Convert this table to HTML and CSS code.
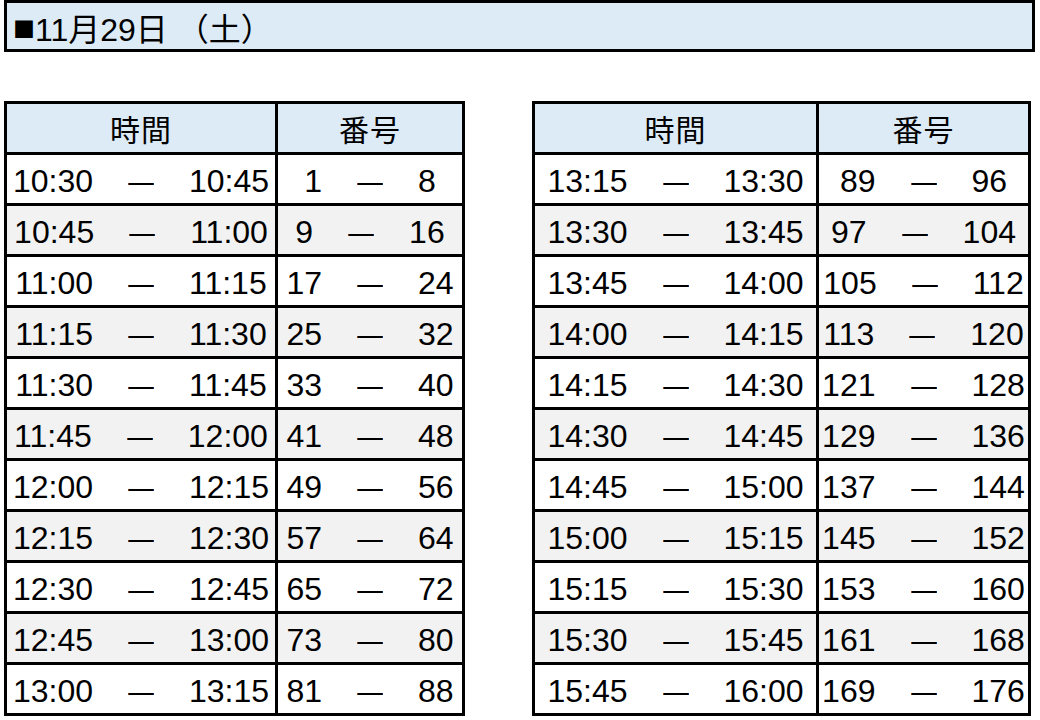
FILE: index.html
```html
<!DOCTYPE html>
<html lang="ja">
<head>
<meta charset="utf-8">
<title>11月29日（土）</title>
<link rel="stylesheet" href="styles.css">
</head>
<body>
<div class="title"><span class="sq">■</span>11月29日 （土）</div>
<div class="tables">
  <div class="tbl left">
    <div class="c h">時間</div><div class="c h">番号</div>
    <div class="c"><span>10:30</span><span class="m"><span class="d">—</span></span><span>10:45</span></div><div class="c"><span>1</span><span class="m"><span class="d">—</span></span><span>8</span></div>
    <div class="c g"><span>10:45</span><span class="m"><span class="d">—</span></span><span>11:00</span></div><div class="c g"><span>9</span><span class="m"><span class="d">—</span></span><span>16</span></div>
    <div class="c"><span>11:00</span><span class="m"><span class="d">—</span></span><span>11:15</span></div><div class="c"><span>17</span><span class="m"><span class="d">—</span></span><span>24</span></div>
    <div class="c g"><span>11:15</span><span class="m"><span class="d">—</span></span><span>11:30</span></div><div class="c g"><span>25</span><span class="m"><span class="d">—</span></span><span>32</span></div>
    <div class="c"><span>11:30</span><span class="m"><span class="d">—</span></span><span>11:45</span></div><div class="c"><span>33</span><span class="m"><span class="d">—</span></span><span>40</span></div>
    <div class="c g"><span>11:45</span><span class="m"><span class="d">—</span></span><span>12:00</span></div><div class="c g"><span>41</span><span class="m"><span class="d">—</span></span><span>48</span></div>
    <div class="c"><span>12:00</span><span class="m"><span class="d">—</span></span><span>12:15</span></div><div class="c"><span>49</span><span class="m"><span class="d">—</span></span><span>56</span></div>
    <div class="c g"><span>12:15</span><span class="m"><span class="d">—</span></span><span>12:30</span></div><div class="c g"><span>57</span><span class="m"><span class="d">—</span></span><span>64</span></div>
    <div class="c"><span>12:30</span><span class="m"><span class="d">—</span></span><span>12:45</span></div><div class="c"><span>65</span><span class="m"><span class="d">—</span></span><span>72</span></div>
    <div class="c g"><span>12:45</span><span class="m"><span class="d">—</span></span><span>13:00</span></div><div class="c g"><span>73</span><span class="m"><span class="d">—</span></span><span>80</span></div>
    <div class="c"><span>13:00</span><span class="m"><span class="d">—</span></span><span>13:15</span></div><div class="c"><span>81</span><span class="m"><span class="d">—</span></span><span>88</span></div>
  </div>
  <div class="tbl right">
    <div class="c h">時間</div><div class="c h">番号</div>
    <div class="c"><span>13:15</span><span class="m"><span class="d">—</span></span><span>13:30</span></div><div class="c"><span>89</span><span class="m"><span class="d">—</span></span><span>96</span></div>
    <div class="c g"><span>13:30</span><span class="m"><span class="d">—</span></span><span>13:45</span></div><div class="c g"><span>97</span><span class="m"><span class="d">—</span></span><span>104</span></div>
    <div class="c"><span>13:45</span><span class="m"><span class="d">—</span></span><span>14:00</span></div><div class="c"><span>105</span><span class="m"><span class="d">—</span></span><span>112</span></div>
    <div class="c g"><span>14:00</span><span class="m"><span class="d">—</span></span><span>14:15</span></div><div class="c g"><span>113</span><span class="m"><span class="d">—</span></span><span>120</span></div>
    <div class="c"><span>14:15</span><span class="m"><span class="d">—</span></span><span>14:30</span></div><div class="c"><span>121</span><span class="m"><span class="d">—</span></span><span>128</span></div>
    <div class="c g"><span>14:30</span><span class="m"><span class="d">—</span></span><span>14:45</span></div><div class="c g"><span>129</span><span class="m"><span class="d">—</span></span><span>136</span></div>
    <div class="c"><span>14:45</span><span class="m"><span class="d">—</span></span><span>15:00</span></div><div class="c"><span>137</span><span class="m"><span class="d">—</span></span><span>144</span></div>
    <div class="c g"><span>15:00</span><span class="m"><span class="d">—</span></span><span>15:15</span></div><div class="c g"><span>145</span><span class="m"><span class="d">—</span></span><span>152</span></div>
    <div class="c"><span>15:15</span><span class="m"><span class="d">—</span></span><span>15:30</span></div><div class="c"><span>153</span><span class="m"><span class="d">—</span></span><span>160</span></div>
    <div class="c g"><span>15:30</span><span class="m"><span class="d">—</span></span><span>15:45</span></div><div class="c g"><span>161</span><span class="m"><span class="d">—</span></span><span>168</span></div>
    <div class="c"><span>15:45</span><span class="m"><span class="d">—</span></span><span>16:00</span></div><div class="c"><span>169</span><span class="m"><span class="d">—</span></span><span>176</span></div>
  </div>
</div>
</body>
</html>
```
FILE: styles.css
```css
* { box-sizing: border-box; }
html, body { margin: 0; padding: 0; background: #fff; }
body {
  font-family: "Liberation Sans", "Noto Sans CJK JP", sans-serif;
  color: #000;
  width: 1040px;
  height: 720px;
  overflow: hidden;
}
.title {
  margin-left: 4px;
  width: 1031px;
  height: 52px;
  border: 3px solid #000;
  background: #ddebf7;
  font-size: 32px;
  display: flex;
  align-items: center;
  padding-left: 6px;
  padding-top: 2px;
  white-space: pre;
}
.sq {
  font-family: "Noto Sans CJK JP", sans-serif;
  font-size: 22px;
  margin-right: 0;
}
.tables {
  display: flex;
  gap: 67px;
  margin: 49px 0 0 4px;
}
.tbl {
  display: grid;
  gap: 3px;
  padding: 3px;
  background: #000;
  grid-auto-rows: 48px;
}
.left { grid-template-columns: 268px 184px; }
.right { grid-template-columns: 281px 209px; }
.c {
  background: #fff;
  display: flex;
  align-items: center;
  justify-content: center;
  font-size: 32px;
  padding-top: 4px;
  white-space: nowrap;
}
.c.g { background: #f2f2f2; }
.c.h {
  background: #ddebf7;
  font-family: "Noto Sans CJK JP", sans-serif;
  font-size: 30px;
  padding-top: 0;
  letter-spacing: 1px;
}
.m {
  width: 96px;
  display: flex;
  justify-content: center;
}
.d {
  display: inline-block;
  transform: scaleX(0.8);
}
```
